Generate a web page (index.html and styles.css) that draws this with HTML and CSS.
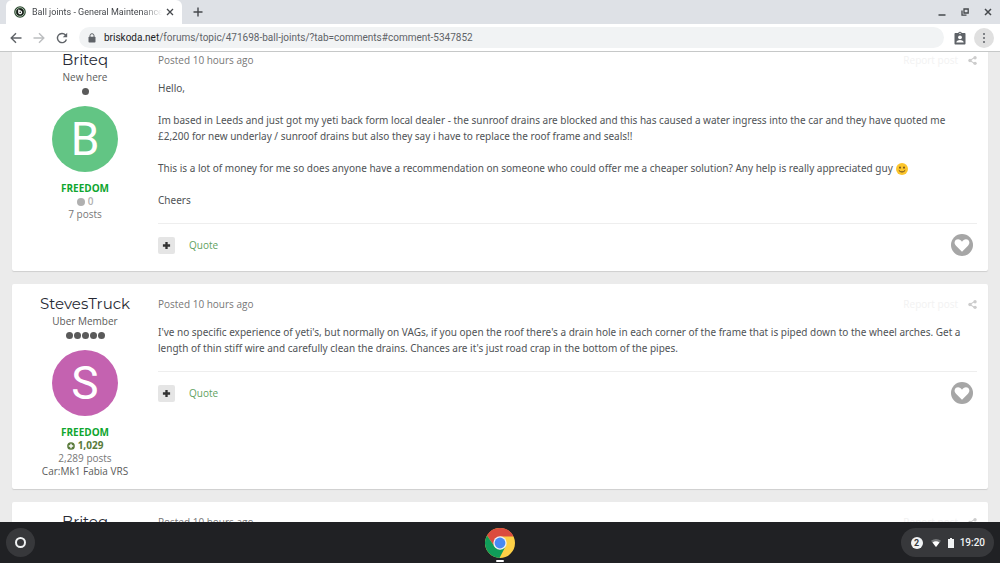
FILE: index.html
```html
<!DOCTYPE html>
<html lang="en">
<head>
    <meta charset="UTF-8">
    <meta name="viewport" content="width=device-width, initial-scale=1.0">
    <title>Ball joints - General Maintenance</title>
    <link rel="stylesheet" href="styles.css">
</head>
<body>
    <svg class="sprite" aria-hidden="true">
        <symbol id="share" viewBox="0 0 16 16">
            <path d="M13 2 3 8l10 6" fill="none" stroke="currentColor" stroke-width="2"/>
            <circle cx="12.500" cy="3" r="3"/><circle cx="3.500" cy="8" r="3"/><circle cx="12.500" cy="13" r="3"/>
        </symbol>
        <symbol id="plus" viewBox="0 0 10 10">
            <path d="M3.700 1h2.600v2.700H9v2.600H6.300V9H3.700V6.300H1V3.700h2.700z"/>
        </symbol>
        <symbol id="heart" viewBox="0 0 22 22">
            <circle cx="11" cy="11" r="11"/>
            <path fill="#fff" d="M11 17.800 5 11.700C2.200 8.700 4 5.200 7 5.200c1.700 0 3.100.9 4 2.500.9-1.600 2.300-2.500 4-2.500 3 0 4.800 3.500 2 6.500z"/>
        </symbol>
    </svg>

    <!-- browser tabs -->
    <div class="tabs">
        <div class="tab">
            <svg class="favicon" viewBox="0 0 12 12">
                <circle cx="6" cy="6" r="5.800" fill="#2c4a30"/>
                <circle cx="6" cy="6" r="4.300" fill="none" stroke="#a9b8aa" stroke-width="1"/>
                <circle cx="6" cy="6" r="3.600" fill="#161c18"/>
                <path d="M4.800 3.500v3.700M4.800 6.300a1.400 1.400 0 1 0 2.800 0 1.400 1.400 0 1 0-2.800 0" fill="none" stroke="#fff" stroke-width="1.200"/>
            </svg>
            <span class="tab-title">Ball joints - General Maintenance</span>
            <button type="button" class="tab-close" aria-label="Close tab">
                <svg viewBox="0 0 8 8"><path d="m1 1 6 6M7 1 1 7" stroke="currentColor" stroke-width="1.300"/></svg>
            </button>
        </div>
        <button type="button" class="new-tab" aria-label="New tab">
            <svg viewBox="0 0 10 10"><path d="M5 .5v9M.5 5h9" stroke="currentColor" stroke-width="1.400"/></svg>
        </button>
        <div class="window-buttons">
            <button type="button" aria-label="Minimise"><svg viewBox="0 0 8 8"><path d="M.5 7h7" stroke="currentColor" stroke-width="1.500"/></svg></button>
            <button type="button" aria-label="Restore"><svg viewBox="0 0 8 8"><path d="M3 1h4.200v4H3zM1 2.500v4.700h4.500" fill="none" stroke="currentColor" stroke-width="1.300"/></svg></button>
            <button type="button" aria-label="Close"><svg viewBox="0 0 8 8"><path d="m1 1 6 6M7 1 1 7" stroke="currentColor" stroke-width="1.500"/></svg></button>
        </div>
    </div>

    <!-- address bar -->
    <div class="toolbar">
        <button type="button" class="nav" aria-label="Back"><svg viewBox="0 0 12 12"><path d="M11.500 6H1.500M6 1.200 1.200 6 6 10.800" fill="none" stroke="currentColor" stroke-width="1.400"/></svg></button>
        <button type="button" class="nav nav-off" aria-label="Forward"><svg viewBox="0 0 12 12"><path d="M.5 6h10M6 1.200 10.800 6 6 10.800" fill="none" stroke="currentColor" stroke-width="1.400"/></svg></button>
        <button type="button" class="nav" aria-label="Reload"><svg viewBox="0 0 12 12"><path d="M10.400 7.500A4.600 4.600 0 1 1 9.500 3L10.500 4" fill="none" stroke="currentColor" stroke-width="1.400"/><path d="M11.200.8v4.500H6.800z" fill="currentColor"/></svg></button>
        <div class="address">
            <svg class="lock" viewBox="0 0 8 10"><path d="M2 4V2.700a2 2 0 0 1 4 0V4" fill="none" stroke="currentColor" stroke-width="1"/><rect x=".5" y="3.700" width="7" height="5.800" rx=".8" fill="currentColor"/></svg>
            <span class="url"><b>briskoda.net</b>/forums/topic/471698-ball-joints/?tab=comments#comment-5347852</span>
        </div>
        <button type="button" class="badge" aria-label="Profile">
            <svg viewBox="0 0 12 14"><path d="M1.500 2h2.700a1.900 1.900 0 0 1 3.600 0h2.700c.6 0 1 .4 1 1v9.500c0 .6-.4 1-1 1h-9c-.6 0-1-.4-1-1V3c0-.6.4-1 1-1z" fill="currentColor"/><circle cx="6" cy="2.400" r=".7" fill="#fff"/><circle cx="6" cy="6.300" r="1.900" fill="#fff"/><path d="M2.300 11.500c0-1.500 1.700-2.500 3.700-2.500s3.700 1 3.700 2.500z" fill="#fff"/></svg>
        </button>
        <button type="button" class="menu" aria-label="Menu"><svg viewBox="0 0 4 12"><circle cx="2" cy="2" r="1"/><circle cx="2" cy="6" r="1"/><circle cx="2" cy="10" r="1"/></svg></button>
    </div>

    <main class="page">
        <div class="posts">
            <article class="post">
                <aside class="author">
                    <h3>Briteq</h3>
                    <p>New here</p>
                    <div class="pips"><i></i></div>
                    <div class="avatar green">B</div>
                    <p class="group">FREEDOM</p>
                    <p class="rep"><i class="rep-dot"></i>0</p>
                    <p class="count">7 posts</p>
                </aside>
                <div class="content">
                    <header>
                        <span>Posted 10 hours ago</span>
                        <a href="#" class="report">Report post</a>
                        <a href="#" class="share" aria-label="Share"><svg><use href="#share"/></svg></a>
                    </header>
                    <div class="text">
                        <p>Hello,</p>
                        <p>Im based in Leeds and just got my yeti back form local dealer - the sunroof drains are blocked and this has caused a water ingress into the car and they have quoted me £2,200 for new underlay / sunroof drains but also they say i have to replace the roof frame and seals!!</p>
                        <p>This is a lot of money for me so does anyone have a recommendation on someone who could offer me a cheaper solution? Any help is really appreciated guy
                            <svg class="smiley" viewBox="0 0 12 12"><circle cx="6" cy="6" r="6" fill="#fcc52c"/><ellipse cx="4" cy="4.600" rx=".8" ry="1.200" fill="#65471b"/><ellipse cx="8" cy="4.600" rx=".8" ry="1.200" fill="#65471b"/><path d="M2.800 7.400q3.200 3.200 6.400 0" fill="none" stroke="#65471b" stroke-width="1"/></svg>
                        </p>
                        <p>Cheers</p>
                    </div>
                    <footer>
                        <button type="button" class="multi" aria-label="Multiquote"><svg><use href="#plus"/></svg></button>
                        <a href="#" class="quote">Quote</a>
                        <button type="button" class="like" aria-label="Like"><svg><use href="#heart"/></svg></button>
                    </footer>
                </div>
            </article>

            <article class="post">
                <aside class="author">
                    <h3>StevesTruck</h3>
                    <p>Uber Member</p>
                    <div class="pips"><i></i><i></i><i></i><i></i><i></i></div>
                    <div class="avatar purple">S</div>
                    <p class="group">FREEDOM</p>
                    <p class="rep positive"><svg viewBox="0 0 10 10"><circle cx="5" cy="5" r="4.800" fill="currentColor"/><path d="M5 2.200v5.600M2.200 5h5.600" stroke="#fff" stroke-width="1.800"/></svg>1,029</p>
                    <p class="count">2,289 posts</p>
                    <p>Car:Mk1 Fabia VRS</p>
                </aside>
                <div class="content">
                    <header>
                        <span>Posted 10 hours ago</span>
                        <a href="#" class="report">Report post</a>
                        <a href="#" class="share" aria-label="Share"><svg><use href="#share"/></svg></a>
                    </header>
                    <div class="text">
                        <p>I've no specific experience of yeti's, but normally on VAGs, if you open the roof there's a drain hole in each corner of the frame that is piped down to the wheel arches. Get a length of thin stiff wire and carefully clean the drains. Chances are it's just road crap in the bottom of the pipes.</p>
                    </div>
                    <footer>
                        <button type="button" class="multi" aria-label="Multiquote"><svg><use href="#plus"/></svg></button>
                        <a href="#" class="quote">Quote</a>
                        <button type="button" class="like" aria-label="Like"><svg><use href="#heart"/></svg></button>
                    </footer>
                </div>
            </article>

            <article class="post">
                <aside class="author">
                    <h3>Briteq</h3>
                </aside>
                <div class="content">
                    <header>
                        <span>Posted 10 hours ago</span>
                        <a href="#" class="report">Report post</a>
                        <a href="#" class="share" aria-label="Share"><svg><use href="#share"/></svg></a>
                    </header>
                </div>
            </article>
        </div>
    </main>

    <!-- system shelf -->
    <div class="shelf">
        <button type="button" class="launcher" aria-label="Launcher"><i></i></button>
        <button type="button" class="app" aria-label="Chrome">
            <svg viewBox="0 0 30 30">
                <circle cx="15" cy="15" r="15" fill="#fdd046"/>
                <path d="M15 8.500H28.500A15 15 0 0 0 2 7.500L9.400 18.300z" fill="#db4c3f"/>
                <path d="M2 7.500A15 15 0 0 0 14.500 30L20.600 18.300 15 21.500 9.400 18.300z" fill="#109d59"/>
                <circle cx="15" cy="15" r="6.700" fill="#f1f1f1"/>
                <circle cx="15" cy="15" r="5.400" fill="#4889f4"/>
            </svg>
            <i></i>
        </button>
        <button type="button" class="status">
            <span class="notices">2</span>
            <svg class="wifi" viewBox="0 0 10 8"><path d="M0 1.700Q5-1.700 10 1.700L5 8z" fill="#77797b"/><path d="M1.500 3.400Q5 1 8.500 3.400L5 8z" fill="#fff"/></svg>
            <svg class="battery" viewBox="0 0 6 10"><path d="M2 0h2v1h2v9H0V1h2z" fill="#f1f3f4"/></svg>
            <span>19:20</span>
        </button>
    </div>
</body>
</html>
```
FILE: styles.css
```css
* {
    box-sizing: border-box;
}

body {
    margin: 0;
    height: 100vh;
    display: flex;
    flex-direction: column;
    overflow: hidden;
    font-family: "Open Sans", sans-serif;
    font-size: 10px;
    color: #5a5a5a;
    background-color: #ebebeb;
}

button {
    padding: 0;
    border: none;
    background: none;
    color: inherit;
    font-family: inherit;
    cursor: pointer;
}

a {
    color: inherit;
    text-decoration: none;
}

p,
h3 {
    margin: 0;
}

svg {
    display: block;
    fill: currentColor;
}

.sprite {
    display: none;
}

/* tabs */
.tabs {
    flex: none;
    display: flex;
    align-items: center;
    height: 24px;
    background-color: #dee1e6;
    color: #45484c;
    font-family: Roboto, sans-serif;
    font-size: 9px;
}

.tab {
    display: flex;
    align-items: center;
    width: 176px;
    height: 24px;
    margin-left: 6px;
    padding: 0 8px;
    background-color: #fff;
    border-radius: 6px 6px 0 0;
}

.favicon {
    flex: none;
    width: 12px;
    height: 12px;
    margin-right: 6px;
}

.tab-title {
    flex: 1;
    overflow: hidden;
    white-space: nowrap;
    -webkit-mask-image: linear-gradient(to right, #000 85%, transparent);
    mask-image: linear-gradient(to right, #000 85%, transparent);
}

.tab-close svg {
    width: 8px;
    height: 8px;
    margin-left: 4px;
}

.new-tab svg {
    width: 10px;
    height: 10px;
    margin-left: 11px;
}

.window-buttons {
    display: flex;
    gap: 15px;
    margin-left: auto;
    padding-right: 8px;
}

.window-buttons svg {
    width: 8px;
    height: 8px;
}

/* toolbar */
.toolbar {
    flex: none;
    display: flex;
    align-items: center;
    height: 28px;
    padding: 0 6px 0 10px;
    background-color: #fff;
    border-bottom: 1px solid #c6c8c8;
    color: #5f6368;
    font-family: Roboto, sans-serif;
}

.nav {
    margin-right: 11px;
}

.nav svg {
    width: 12px;
    height: 12px;
}

.nav-off {
    color: #bcbec0;
}

.address {
    flex: 1;
    display: flex;
    align-items: center;
    gap: 8px;
    height: 21px;
    padding-left: 9px;
    border-radius: 11px;
    background-color: #f1f3f4;
    font-size: 10px;
}

.url b {
    color: #202124;
    font-weight: normal;
}

.lock {
    width: 8px;
    height: 10px;
}

.badge svg {
    width: 12px;
    height: 14px;
    margin: 0 8px 0 10px;
}

.menu {
    display: flex;
    align-items: center;
    justify-content: center;
    width: 20px;
    height: 20px;
    border-radius: 50%;
    background-color: #e0e0e0;
}

.menu svg {
    width: 4px;
    height: 12px;
}

/* posts */
.page {
    flex: 1;
    min-height: 0;
    overflow: hidden;
    padding: 0 12px;
}

.posts {
    display: flex;
    flex-direction: column;
    gap: 13px;
    margin-top: -12px;
}

.post {
    display: flex;
    background-color: #fff;
    border-radius: 2px;
    box-shadow: 0 1px 1px #cfcfcf;
}

.author {
    flex: none;
    width: 146px;
    padding: 10px 0 11px;
    line-height: 13px;
    text-align: center;
}

.author h3 {
    margin-bottom: 1px;
    font-family: Montserrat, Inter, sans-serif;
    font-size: 15px;
    font-weight: normal;
    line-height: 20px;
    color: #272a34;
}

.pips {
    display: flex;
    justify-content: center;
    gap: 1px;
    margin: 4px 0 11px;
}

.pips i {
    width: 7px;
    height: 7px;
    border-radius: 50%;
    background-color: #5a5a5a;
}

.avatar {
    width: 66px;
    height: 66px;
    margin: 0 auto 10px;
    border-radius: 50%;
    font-family: Roboto, sans-serif;
    font-size: 46px;
    line-height: 67px;
    color: #fff;
}

.green {
    background-color: #62c584;
}

.purple {
    background-color: #c462b0;
}

.author .group {
    color: #0fa62f;
    font-weight: bold;
}

.rep {
    display: flex;
    align-items: center;
    justify-content: center;
    gap: 3px;
    color: #b0b0b0;
    font-weight: 600;
}

.rep-dot,
.rep svg {
    width: 8px;
    height: 8px;
}

.rep-dot {
    border-radius: 50%;
    background-color: #b0b0b0;
}

.positive {
    color: #5a7a3a;
    font-weight: bold;
}

.count {
    color: #777;
}

.content {
    flex: 1;
    min-width: 0;
    padding: 12px 11px 15px 0;
}

.content header {
    display: flex;
    align-items: center;
    height: 16px;
    margin-bottom: 12px;
    color: #777;
}

.report {
    margin-left: auto;
    color: #f2f2f2;
}

.share {
    margin-left: 10px;
    color: #ccc;
}

.share svg {
    width: 9px;
    height: 9px;
}

.text {
    font-family: "Noto Sans", "Open Sans", sans-serif;
    font-size: 10px;
    line-height: 16px;
    color: #4f5356;
}

.text p + p {
    margin-top: 16px;
}

.smiley {
    display: inline-block;
    width: 12px;
    height: 12px;
    margin-left: 1px;
    vertical-align: -3px;
}

.content footer {
    display: flex;
    align-items: center;
    margin-top: 15px;
    padding-top: 10px;
    border-top: 1px solid #eee;
}

.multi {
    display: flex;
    align-items: center;
    justify-content: center;
    width: 17px;
    height: 17px;
    border-radius: 2px;
    background-color: #e5e5e5;
    color: #333;
}

.multi svg {
    width: 9px;
    height: 9px;
}

.quote {
    margin-left: 14px;
    color: #5fa25f;
}

.like {
    margin: 0 4px 0 auto;
    color: #a6a6a6;
}

.like svg {
    width: 22px;
    height: 22px;
}

/* shelf */
.shelf {
    flex: none;
    display: grid;
    grid-template-columns: 1fr auto 1fr;
    align-items: center;
    height: 41px;
    padding: 0 6px;
    background-color: #202124;
    color: #f1f3f4;
    font-family: Roboto, sans-serif;
}

.launcher {
    display: flex;
    align-items: center;
    justify-content: center;
    width: 29px;
    height: 29px;
    border-radius: 50%;
    background-color: #37383b;
}

.launcher i {
    width: 11px;
    height: 11px;
    border: 2px solid #f1f3f4;
    border-radius: 50%;
}

.app {
    display: flex;
    flex-direction: column;
    align-items: center;
    gap: 2px;
    padding-top: 4px;
}

.app svg {
    width: 30px;
    height: 30px;
}

.app i {
    width: 8px;
    height: 2px;
    border-radius: 1px;
    background-color: #fff;
}

.status {
    justify-self: end;
    display: flex;
    align-items: center;
    height: 29px;
    padding: 0 9px 0 10px;
    border-radius: 15px;
    background-color: #37383b;
    font-size: 10px;
    font-weight: 500;
}

.notices {
    width: 12px;
    height: 12px;
    border-radius: 50%;
    background-color: #f1f3f4;
    color: #37383b;
    font-size: 9px;
    font-weight: bold;
    line-height: 12px;
}

.wifi {
    width: 10px;
    height: 8px;
    margin: 0 7px 0 8px;
}

.battery {
    width: 6px;
    height: 10px;
    margin-right: 6px;
}
```
